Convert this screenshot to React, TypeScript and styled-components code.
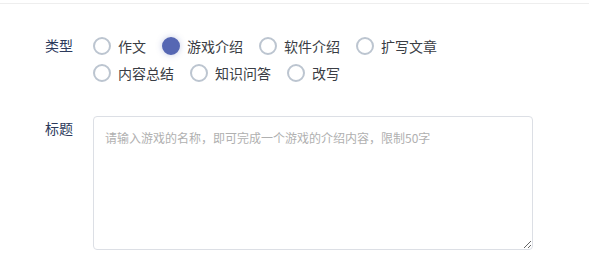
import React, { useState } from 'react';
import styled, { createGlobalStyle } from 'styled-components';

const GlobalStyle = createGlobalStyle`
  html, body {
    margin: 0;
    padding: 0;
    background: #ffffff;
    font-family: "Noto Sans CJK SC", "Noto Sans", sans-serif;
  }
`;

const TopBar = styled.div`
  height: 3px;
  border-bottom: 1px solid #eeeeee;
`;

const Form = styled.form`
  padding: 28px 0 0 45px;
`;

const FormItem = styled.div<{ $gap?: number }>`
  display: flex;
  align-items: flex-start;
  margin-bottom: ${(p) => p.$gap ?? 0}px;
`;

const Label = styled.label<{ $lh: number }>`
  width: 48px;
  flex-shrink: 0;
  font-size: 14px;
  line-height: ${(p) => p.$lh}px;
  color: #2c3a5c;
`;

const RadioGroup = styled.div`
  display: flex;
  flex-wrap: wrap;
  width: 400px;
`;

const RadioItem = styled.label`
  display: flex;
  align-items: center;
  height: 27px;
  margin-right: 16px;
  cursor: pointer;
  font-size: 14px;
  color: #3a3d44;
`;

const Dot = styled.span<{ $checked: boolean }>`
  box-sizing: border-box;
  width: 18px;
  height: 18px;
  margin-right: 7px;
  border-radius: 50%;
  border: 2px solid ${(p) => (p.$checked ? '#5667b3' : '#bcc5d0')};
  background: ${(p) => (p.$checked ? '#5667b3' : '#ffffff')};
  box-shadow: ${(p) => (p.$checked ? '0 0 6px rgba(86, 103, 179, 0.35)' : 'none')};
`;

const TextArea = styled.textarea`
  box-sizing: border-box;
  width: 440px;
  height: 134px;
  padding: 12px 11px;
  border: 1px solid #dcdfe5;
  border-radius: 4px;
  font-family: inherit;
  font-size: 12px;
  line-height: 18px;
  color: #333;
  outline: none;

  &::placeholder {
    color: #b0b0b0;
  }
`;

const types = ['作文', '游戏介绍', '软件介绍', '扩写文章', '内容总结', '知识问答', '改写'];

export default function App() {
  const [selected, setSelected] = useState('游戏介绍');

  return (
    <>
      <GlobalStyle />
      <TopBar />
      <Form>
        <FormItem $gap={30}>
          <Label $lh={27}>类型</Label>
          <RadioGroup>
            {types.map((t) => (
              <RadioItem key={t} onClick={() => setSelected(t)}>
                <Dot $checked={selected === t} />
                {t}
              </RadioItem>
            ))}
          </RadioGroup>
        </FormItem>
        <FormItem>
          <Label $lh={24}>标题</Label>
          <TextArea placeholder="请输入游戏的名称，即可完成一个游戏的介绍内容，限制50字" />
        </FormItem>
      </Form>
    </>
  );
}
